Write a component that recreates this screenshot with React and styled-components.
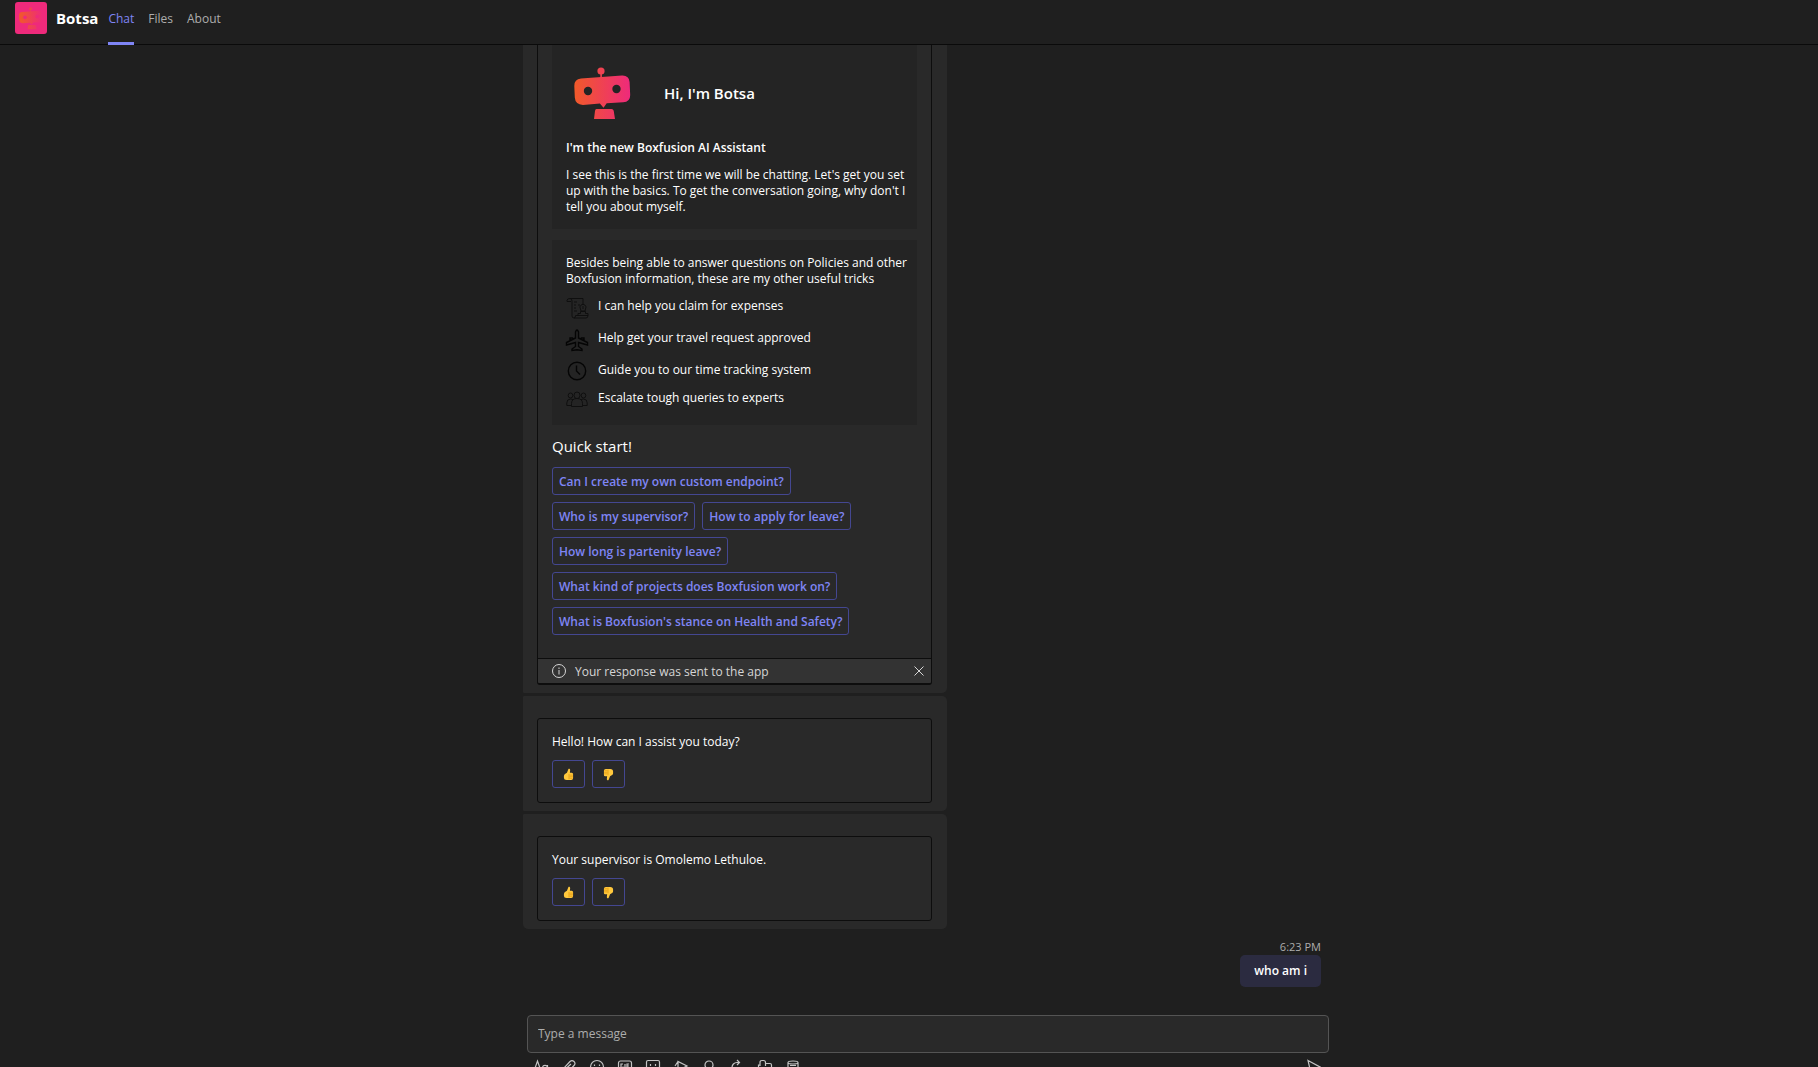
import React from "react";
import styled, { createGlobalStyle, css } from "styled-components";

const Global = createGlobalStyle`
  * { box-sizing: border-box; }
  html, body { margin: 0; background: #1f1f1f; }
  body, button, input { font-family: "Open Sans", "Noto Sans", sans-serif; font-size: 12px; }
  h1, h2, p, ul { margin: 0; padding: 0; }
`;

const Page = styled.div`
  height: 100vh;
  display: flex;
  flex-direction: column;
  overflow: hidden;
  background: #1f1f1f;
  color: #fff;
`;

const Header = styled.header`
  flex: none;
  display: flex;
  height: 45px;
  padding-left: 15px;
  border-bottom: 1px solid #0a0a0a;
`;

const Logo = styled.svg`
  display: block;
  width: 32px;
  height: 32px;
  margin-top: 2px;
  border-radius: 3px;
  background: #ee2a7b;
`;

const AppName = styled.h1`
  margin: 0 10px 0 9px;
  font-size: 15px;
  line-height: 36px;
  font-weight: 700;
`;

const Tabs = styled.nav`
  display: flex;
  gap: 14px;
`;

const Tab = styled.a`
  height: 45px;
  line-height: 38px;
  color: #adadad;
  text-decoration: none;
  ${(p) => p.$active && css`
    color: #7f85f5;
    border-bottom: 3px solid #7f85f5;
  `}
`;

const Column = styled.div`
  width: 100%;
  max-width: 840px;
  margin: 0 auto;
`;

const Messages = styled.main`
  flex: 1;
  min-height: 0;
  overflow: hidden;
  display: flex;
  flex-direction: column;
  justify-content: flex-end;
`;

const Thread = styled(Column)`
  display: flex;
  flex-direction: column;
  align-items: flex-start;
  gap: 3px;
  padding: 0 8px 28px 34px;
`;

const Bubble = styled.article`
  width: 424px;
  max-width: 100%;
  padding: 22px 15px 8px 14px;
  border-radius: 1px 5px 5px 1px;
  background: #292929;
  &:last-of-type { border-bottom-left-radius: 5px; }
`;

const Card = styled.div`
  border: 1px solid #0d0d0d;
  border-bottom-width: ${(p) => (p.$sent ? 2 : 1)}px;
  border-radius: 3px;
  overflow: hidden;
`;

const CardBody = styled.div`
  padding: 15px 14px ${(p) => (p.$roomy ? 23 : 14)}px;
`;

const Panel = styled.section`
  padding: 15px 6px ${(p) => (p.$roomy ? 19 : 14)}px 14px;
  margin-bottom: 11px;
  background: #242424;
`;

const Greeting = styled.div`
  display: flex;
  align-items: center;
  gap: 26px;
  padding-top: 10px;
  margin-bottom: 17px;
`;

const Robot = styled.svg`
  display: block;
  width: 72px;
  height: 60px;
`;

const Title = styled.h2`
  font-size: 15px;
  line-height: 20px;
  font-weight: 600;
`;

const Text = styled.p`
  line-height: 16px;
  margin-bottom: ${(p) => p.$gap || 0}px;
  font-weight: ${(p) => (p.$strong ? 600 : 400)};
`;

const Skills = styled.ul`
  list-style: none;
  display: flex;
  flex-direction: column;
  gap: 10px;
`;

const Skill = styled.li`
  display: flex;
  align-items: flex-start;
  gap: 10px;
  line-height: 16px;
  height: ${(p) => p.$height}px;
`;

const SkillIcon = styled.svg`
  flex: none;
  width: 22px;
  height: 22px;
  margin-top: -1px;
  overflow: visible;
  fill: none;
  stroke: ${(p) => (p.$faint ? "#0f0f0f" : "#050505")};
  stroke-width: ${(p) => (p.$faint ? 1 : 1.4)};
`;

const QuickTitle = styled.h2`
  margin-bottom: 10px;
  font-size: 15px;
  line-height: 21px;
  font-weight: 400;
`;

const Actions = styled.div`
  display: flex;
  flex-wrap: wrap;
  gap: 7px;
`;

const Action = styled.button`
  height: 28px;
  padding: 0 6px;
  border: 1px solid #444791;
  border-radius: 3px;
  background: transparent;
  color: #7f85f5;
  font-weight: 600;
  white-space: nowrap;
`;

const Vote = styled(Action)`
  display: flex;
  align-items: center;
  justify-content: center;
  width: 33px;
  padding: 0;
`;

const Status = styled.div`
  display: flex;
  align-items: center;
  height: 25px;
  padding: 0 7px 0 14px;
  gap: 9px;
  border-top: 1px solid #0d0d0d;
  background: #333;
  color: #d6d6d6;
  svg { display: block; }
`;

const StatusText = styled.span`
  flex: 1;
`;

const Dismiss = styled.button`
  padding: 0;
  border: 0;
  background: none;
  color: #d6d6d6;
`;

const Own = styled.div`
  align-self: flex-end;
  display: flex;
  flex-direction: column;
  align-items: flex-end;
  padding-top: 6px;
`;

const Time = styled.time`
  font-size: 11px;
  line-height: 17px;
  color: #adadad;
`;

const OwnBubble = styled.div`
  padding: 0 14px;
  border-radius: 5px;
  background: #2b2b40;
  line-height: 32px;
  font-weight: 600;
`;

const Composer = styled(Column)`
  flex: none;
  padding-left: 38px;
`;

const MessageInput = styled.input`
  display: block;
  width: 100%;
  height: 38px;
  padding: 0 10px 2px;
  border: 1px solid #545454;
  border-radius: 4px;
  background: #292929;
  color: #fff;
  outline: 0;
  &::placeholder { color: #adadad; opacity: 1; }
`;

const Tools = styled.div`
  display: flex;
  height: 14px;
  padding: 6px 8px 0 6px;
  gap: 12px;
  overflow: hidden;
`;

const Tool = styled.button`
  flex: none;
  width: 16px;
  height: 16px;
  padding: 0;
  border: 0;
  background: none;
  color: #c4c4c4;
  &:last-child { margin-left: auto; }
  svg { display: block; width: 16px; height: 16px; fill: none; stroke: currentColor; stroke-width: 1.2; }
`;

const BotShape = ({ fill, eye }) => (
  <g fill={fill}>
    <circle cx="27" cy="4" r="3.6" />
    <path d="M26.3 6h1.6v5h-1.6z" />
    <path d="M7 11.5 48 8.5q7-.3 7.6 6.5l.6 13q0 7-7 7.3l-16.5.9-3.2 4.5-3.6-4.1-17 1.300Q1.300 37.500.8 30.500L.3 19Q.2 12 7 11.500z" />
    <path d="M22.500 42h15q1.800 0 2.200 1.800L41 52H20l1-8q.2-2 1.500-2z" />
    <circle cx="14" cy="24" r="4.200" fill={eye} />
    <circle cx="42.500" cy="22" r="4.200" fill={eye} />
  </g>
);

const Thumb = ({ down }) => (
  <svg width="11" height="13" viewBox="0 0 12 14" aria-hidden="true">
    <g transform={down ? "rotate(180 6 7)" : undefined}>
      <path d="M6.200.8c1-.3 1.700.5 1.600 1.700L7.500 5H9.600q1.400.2 1.400 1.500v4.700q0 1.900-2 1.900H4Q1 13 1 10.300V8.500q0-1.500 1.500-2.300L4.300 5 5.800 1.300z" fill="#ffc83d" />
      <path d="M6.500 6.300v6M7 7.700h3.800M7 9.400h3.800M7 11.100h3.600" stroke="#e39a10" strokeWidth=".8" fill="none" />
    </g>
  </svg>
);

const skills = [
  {
    text: "I can help you claim for expenses", height: 22, faint: true,
    icon: <path d="M4 1.500h13v6M4 1.500q-3 0-3 2v1h4M4 1.500q2 0 2 2.500v15q0 2 2 2h12q2 0 2-2.500H9.500q0 2.500-1.500 2.500M8 5h3M8 8h2M12 8h2M8 11h2M8 14h3M12 18.500h10v-2h-2.500v-2h-5v2H12zM14.500 12a3 3 0 1 1 5 0l-.5 2h-4zM17 9v3" />,
  },
  {
    text: "Help get your travel request approved", height: 22,
    icon: <path d="M9.500 3q1.500-4 3 0v6l9 4.500V16l-9-2.500v4l3.500 2.500v1.500l-5-.8-5 .8V20l3.500-2.500v-4L.5 16v-2.500l9-4.500zM4 11.500V9h2.500v1.500M18 11.500V9h-2.500v1.500" />,
  },
  {
    text: "Guide you to our time tracking system", height: 18,
    icon: <g><circle cx="11" cy="10" r="8.700" /><path d="M10.500 4.500V10l3.500 3.500" /></g>,
  },
  {
    text: "Escalate tough queries to experts", height: 16, faint: true,
    icon: <path d="M5.500 16.500H.8v-2.500q0-4 3.700-4 2 0 2.500 1M16.500 16.500h4.700v-2.500q0-4-3.700-4-2 0-2.500 1M5.500 17.500v-3q0-5 5.500-5t5.500 5v3zM8 6.300a3 3.300 0 1 1 6 0 3 3.300 0 0 1-6 0zM2.200 6.500a2.300 2.500 0 1 1 4.600 0 2.300 2.500 0 0 1-4.600 0zM15.200 6.500a2.300 2.500 0 1 1 4.600 0 2.300 2.500 0 0 1-4.600 0z" />,
  },
];

const questions = [
  "Can I create my own custom endpoint?",
  "Who is my supervisor?",
  "How to apply for leave?",
  "How long is partenity leave?",
  "What kind of projects does Boxfusion work on?",
  "What is Boxfusion's stance on Health and Safety?",
];

const tools = [
  ["Format", <path d="M1 12 4.500 2 8 12M2.500 8.500h4M14.500 6v6M14.500 9a2.500 2.700 0 1 0-5 0 2.500 2.700 0 0 0 5 0z" />],
  ["Attach", <path d="m3 9 6-6.500q2-1.800 4 0t0 4L7 13q-2 1.500-3 0t0-2.500L10 5" />],
  ["Emoji", <g><circle cx="8" cy="8" r="6.500" /><path d="M5.500 5.500v1.500M10.500 5.500v1.500M5 10q3 3 6 0" /></g>],
  ["Giphy", <g><rect x="1.500" y="2" width="13" height="11" rx="2" /><path d="M6 5H4v4h2V7.500M8 5v4M12 5h-2v4M10 7h2" /></g>],
  ["Sticker", <path d="M3 1.500h10q1.500 0 1.500 1.500v7L10 14.500H3Q1.500 14.500 1.500 13V3Q1.500 1.500 3 1.500zM5.500 5v2M10.500 5v2M5 9.500q3 2.500 6 0" />],
  ["Stream", <path d="M5 2.500v9l9-4.500zM2 7l3-4.500" />],
  ["Praise", <path d="M4 6a4 4 0 1 1 8 0q0 2-1.500 3v5h-5V9Q4 8 4 6z" />],
  ["Loop", <path d="M13 8a5 5 0 1 1-5-4.500h2.500M8 1l2.500 2.500L8 6" />],
  ["Apps", <path d="M3 7V3.500q0-2 2-2h1.500q2 0 2 2V7M8.500 4.500H13q1.500 0 1.500 1.500v5h-6M3 6H1.500v6H8" />],
  ["Approvals", <path d="M3 3.500q0-1.500 5-1.500t5 1.500-5 1.500-5-1.500v8q0 2 5 2t5-2v-8M5 6.500h6" />],
  ["Send", <path d="M3 1.500 15 8 3 14.500 4.500 8z" />],
];

const Feedback = ({ children }) => (
  <Bubble>
    <Card>
      <CardBody>
        <Text $gap={10}>{children}</Text>
        <Actions>
          <Vote type="button" aria-label="Helpful"><Thumb /></Vote>
          <Vote type="button" aria-label="Not helpful"><Thumb down /></Vote>
        </Actions>
      </CardBody>
    </Card>
  </Bubble>
);

export default function App() {
  return (
    <Page>
      <Global />
      <Header>
        <Logo viewBox="0 0 32 32" aria-hidden="true">
          <defs>
            <linearGradient id="badge" gradientUnits="userSpaceOnUse" x1="0" y1="0" x2="54" y2="0">
              <stop offset="0" stopColor="#f15a29" /><stop offset="1" stopColor="#ee2a7b" />
            </linearGradient>
          </defs>
          <g transform="translate(4 5) scale(.43)"><BotShape fill="url(#badge)" eye="#ee2a7b" /></g>
        </Logo>
        <AppName>Botsa</AppName>
        <Tabs>
          <Tab href="#chat" $active>Chat</Tab>
          <Tab href="#files">Files</Tab>
          <Tab href="#about">About</Tab>
        </Tabs>
      </Header>
      <Messages>
        <Thread>
          <Bubble>
            <Card $sent>
              <CardBody $roomy>
                <Panel>
                  <Greeting>
                    <Robot viewBox="0 0 72 60" aria-hidden="true">
                      <defs>
                        <linearGradient id="bot" gradientUnits="userSpaceOnUse" x1="0" y1="0" x2="56" y2="0">
                          <stop offset="0" stopColor="#f15a29" /><stop offset="1" stopColor="#ee2a7b" />
                        </linearGradient>
                      </defs>
                      <g transform="translate(8 4)"><BotShape fill="url(#bot)" eye="#242424" /></g>
                    </Robot>
                    <Title>Hi, I'm Botsa</Title>
                  </Greeting>
                  <Text $strong $gap={11}>I'm the new Boxfusion AI Assistant</Text>
                  <Text>I see this is the first time we will be chatting. Let's get you set up with the basics. To get the conversation going, why don't I tell you about myself.</Text>
                </Panel>
                <Panel $roomy>
                  <Text $gap={11}>Besides being able to answer questions on Policies and other Boxfusion information, these are my other useful tricks</Text>
                  <Skills>
                    {skills.map((s) => (
                      <Skill key={s.text} $height={s.height}>
                        <SkillIcon viewBox="0 0 22 22" $faint={s.faint} aria-hidden="true">{s.icon}</SkillIcon>
                        {s.text}
                      </Skill>
                    ))}
                  </Skills>
                </Panel>
                <QuickTitle>Quick start!</QuickTitle>
                <Actions>
                  {questions.map((q) => <Action type="button" key={q}>{q}</Action>)}
                </Actions>
              </CardBody>
              <Status role="status">
                <svg width="14" height="14" viewBox="0 0 14 14" fill="none" stroke="currentColor" aria-hidden="true">
                  <circle cx="7" cy="7" r="6.500" /><path d="M7 6v4.500M7 3.500V5" />
                </svg>
                <StatusText>Your response was sent to the app</StatusText>
                <Dismiss type="button" aria-label="Dismiss">
                  <svg width="10" height="10" viewBox="0 0 10 10" stroke="currentColor" aria-hidden="true"><path d="m.5.5 9 9m0-9-9 9" /></svg>
                </Dismiss>
              </Status>
            </Card>
          </Bubble>
          <Feedback>Hello! How can I assist you today?</Feedback>
          <Feedback>Your supervisor is Omolemo Lethuloe.</Feedback>
          <Own>
            <Time>6:23 PM</Time>
            <OwnBubble>who am i</OwnBubble>
          </Own>
        </Thread>
      </Messages>
      <Composer as="form" onSubmit={(e) => e.preventDefault()}>
        <MessageInput type="text" placeholder="Type a message" aria-label="Type a message" />
        <Tools>
          {tools.map(([name, icon]) => (
            <Tool type="button" key={name} aria-label={name}>
              <svg viewBox="0 0 16 16" aria-hidden="true">{icon}</svg>
            </Tool>
          ))}
        </Tools>
      </Composer>
    </Page>
  );
}
